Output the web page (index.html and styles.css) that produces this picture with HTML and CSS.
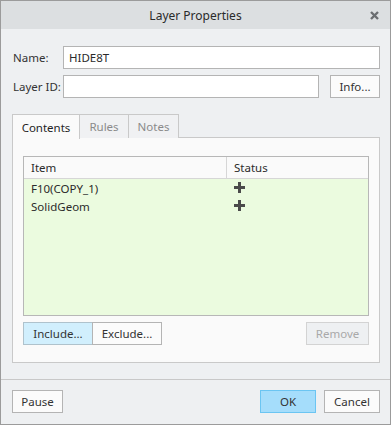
FILE: index.html
```html
<!DOCTYPE html>
<html lang="en">
<head>
  <meta charset="UTF-8" />
  <title>Layer Properties</title>
  <link rel="stylesheet" href="styles.css">
</head>
<body>
  <div class="dialog">
    <div class="titlebar">
      <span class="title">Layer Properties</span>
      <span class="close" aria-label="Close">
        <svg width="9" height="9" viewBox="0 0 9 9">
          <path d="M1 1 L8 8 M8 1 L1 8" stroke="#6b6e71" stroke-width="2.4" />
        </svg>
      </span>
    </div>

    <div class="body">
      <div class="field-row">
        <label class="field-label" for="name">Name:</label>
        <input class="text-input" id="name" type="text" value="HIDE8T">
      </div>
      <div class="field-row">
        <label class="field-label" for="layer-id">Layer ID:</label>
        <input class="text-input" id="layer-id" type="text" value="">
        <button class="btn info-btn">Info...</button>
      </div>

      <div class="tabs">
        <div class="tab active">Contents</div>
        <div class="tab">Rules</div>
        <div class="tab">Notes</div>
      </div>
      <div class="tab-panel">
        <div class="item-table">
          <div class="table-head">
            <div class="col-item">Item</div>
            <div class="col-status">Status</div>
          </div>
          <div class="table-row">
            <div class="col-item">F10(COPY_1)</div>
            <div class="col-status"><span class="plus"></span></div>
          </div>
          <div class="table-row">
            <div class="col-item">SolidGeom</div>
            <div class="col-status"><span class="plus"></span></div>
          </div>
        </div>
        <div class="panel-actions">
          <button class="btn include-btn">Include...</button>
          <button class="btn exclude-btn">Exclude...</button>
          <button class="btn remove-btn" disabled>Remove</button>
        </div>
      </div>
    </div>

    <div class="footer">
      <button class="btn pause-btn">Pause</button>
      <div class="footer-right">
        <button class="btn ok-btn">OK</button>
        <button class="btn cancel-btn">Cancel</button>
      </div>
    </div>
  </div>
</body>
</html>
```

FILE: styles.css
```css
* {
  box-sizing: border-box;
  margin: 0;
  padding: 0;
}

body {
  font-family: "Noto Sans", "Open Sans", sans-serif;
  font-size: 11.5px;
  color: #2b2b2b;
  background: #eef0f2;
}

.dialog {
  width: 391px;
  height: 425px;
  border: 1px solid #9b9b9b;
  background: #eef0f2;
  display: flex;
  flex-direction: column;
}

.titlebar {
  height: 28px;
  flex-shrink: 0;
  background: #dcdfe1;
  display: flex;
  align-items: center;
  justify-content: center;
  position: relative;
}

.title {
  font-size: 12px;
  color: #2a2a2a;
}

.close {
  position: absolute;
  right: 11px;
  top: 10px;
  width: 9px;
  height: 9px;
  display: flex;
}

.body {
  padding: 17px 10px 0 11px;
}

.field-row {
  display: flex;
  align-items: center;
  height: 23px;
  margin-bottom: 6px;
}

.field-label {
  width: 51px;
  flex-shrink: 0;
  white-space: nowrap;
  padding-left: 1px;
  color: #333;
}

.text-input {
  flex: 1;
  min-width: 0;
  height: 23px;
  border: 1px solid #b4b4b4;
  background: #fff;
  font: inherit;
  color: #2b2b2b;
  padding: 0 5px;
  outline: none;
}

.btn {
  font: inherit;
  height: 23px;
  border: 1px solid #b4b4b4;
  background: #fbfbfb;
  color: #333;
  cursor: pointer;
  flex-shrink: 0;
}

.info-btn {
  width: 50px;
  margin-left: 11px;
}

.tabs {
  display: flex;
  margin-top: 16px;
  height: 24px;
}

.tab {
  height: 24px;
  border: 1px solid #c9c9c9;
  border-bottom: none;
  border-left: none;
  background: #f0f1f3;
  color: #8a8a8a;
  display: flex;
  align-items: center;
  justify-content: center;
}

.tab.active {
  width: 68px;
  border-left: 1px solid #c9c9c9;
  background: #fafafa;
  color: #1f1f1f;
  position: relative;
  z-index: 1;
  height: 25px;
}

.tab:nth-child(2) {
  width: 49px;
}

.tab:nth-child(3) {
  width: 50px;
}

.tab-panel {
  height: 226px;
  border: 1px solid #c9c9c9;
  background: #fafafa;
  margin-top: -1px;
  padding: 18px 10px 0 10px;
}

.item-table {
  height: 160px;
  border: 1px solid #b7b7b7;
  background: #ebfbdf;
}

.table-head {
  display: flex;
  height: 22px;
  background: #fafafa;
  border-bottom: 1px solid #d6d6d6;
  align-items: center;
}

.table-head .col-item {
  border-right: 1px solid #d6d6d6;
  height: 100%;
  display: flex;
  align-items: center;
}

.col-item {
  width: 203px;
  padding-left: 7px;
}

.col-status {
  padding-left: 7px;
}

.table-row {
  display: flex;
  height: 18px;
  align-items: center;
}

.plus {
  display: inline-block;
  width: 11px;
  height: 11px;
  margin-top: 2px;
  background:
    linear-gradient(#4a4a4a, #4a4a4a) center / 11px 3px no-repeat,
    linear-gradient(#4a4a4a, #4a4a4a) center / 3px 11px no-repeat;
}

.panel-actions {
  display: flex;
  margin-top: 6px;
}

.include-btn {
  width: 70px;
  background: #d1effd;
  border-color: #afc2cc;
}

.exclude-btn {
  width: 70px;
  margin-left: -1px;
}

.remove-btn {
  width: 63px;
  margin-left: auto;
  background: #eef0f2;
  border-color: #d3d3d3;
  color: #a9a9a9;
  cursor: default;
}

.footer {
  margin-top: 16px;
  border-top: 1px solid #c8c8c8;
  padding: 10px 10px 0 11px;
  display: flex;
  justify-content: space-between;
}

.pause-btn {
  width: 51px;
}

.footer-right {
  display: flex;
  gap: 8px;
}

.ok-btn {
  width: 56px;
  background: #a5ddfb;
  border-color: #6bc5f2;
}

.cancel-btn {
  width: 56px;
}
```
